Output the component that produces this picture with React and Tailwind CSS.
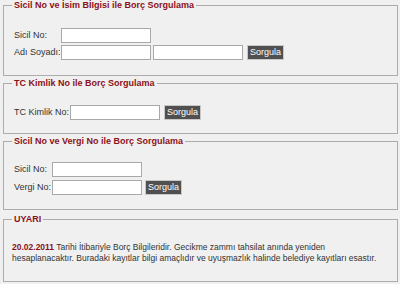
export default function App() {
  const legend = "ml-[-2px] px-[2px] text-[9px] leading-[11px] font-bold text-[#8b1020]";
  const fs = "ml-[3px] mr-[2px] border border-[#acacac] px-[10px]";
  const input = "h-[15px] w-[90px] border border-[#a9a9a9] bg-white";
  const btn = "h-[15px] border border-[#c8c8c8] bg-[#505050] px-[2px] text-[9px] leading-[11px] text-white";
  return (
    <div className="h-[284px] w-[400px] bg-[#f0f0f0] font-['Liberation_Sans',Arial,sans-serif] text-[9px] leading-[11px] text-[#333]">
      <fieldset className={`${fs} pt-[17px] pb-[15px]`}>
        <legend className={legend}>Sicil No ve İsim BİIgisi ile Borç Sorgulama</legend>
        <div className="flex flex-col gap-[2px]">
          <div className="flex items-center">
            <span className="w-[47px]">Sicil No:</span>
            <div className={input} />
          </div>
          <div className="flex items-center">
            <span className="w-[47px]">Adı Soyadı:</span>
            <div className={input} />
            <div className={`${input} ml-[2px]`} />
            <button className={`${btn} ml-[4px]`}>Sorgula</button>
          </div>
        </div>
      </fieldset>

      <fieldset className={`${fs} mt-[2px] pt-[16px] pb-[13px]`}>
        <legend className={legend}>TC Kimlik No ile Borç Sorgulama</legend>
        <div className="flex items-center">
          <span className="w-[56px]">TC Kimlik No:</span>
          <div className={`${input} w-[89px]`} />
          <button className={`${btn} ml-[4px]`}>Sorgula</button>
        </div>
      </fieldset>

      <fieldset className={`${fs} mt-[2px] pt-[15px] pb-[14px]`}>
        <legend className={legend}>Sicil No ve Vergi No ile Borç Sorgulama</legend>
        <div className="flex flex-col gap-[3px]">
          <div className="flex items-center">
            <span className="w-[38px]">Sicil No:</span>
            <div className={input} />
          </div>
          <div className="flex items-center">
            <span className="w-[38px]">Vergi No:</span>
            <div className={input} />
            <button className={`${btn} ml-[3px]`}>Sorgula</button>
          </div>
        </div>
      </fieldset>

      <fieldset className="ml-[3px] mr-[2px] mt-[4px] border border-[#acacac] px-[8px] pt-[17px] pb-[18px]">
        <legend className="px-[2px] text-[9px] leading-[11px] font-bold text-[#8b1020]">UYARI</legend>
        <p className="text-[8.5px] leading-[10.5px]">
          <span className="font-bold text-[#8b1020]">20.02.2011</span> Tarihi İtibariyle Borç Bilgileridir. Gecikme zammı tahsilat anında yeniden
          <br />
          hesaplanacaktır. Buradaki kayıtlar bilgi amaçlıdır ve uyuşmazlık halinde belediye kayıtları esastır.
        </p>
      </fieldset>
    </div>
  );
}
